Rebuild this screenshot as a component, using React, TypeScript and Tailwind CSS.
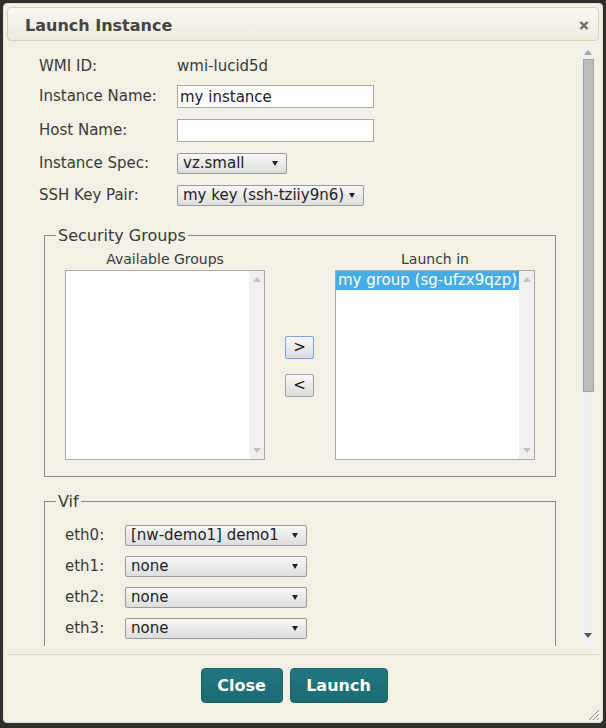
import React from 'react';

const Arrow: React.FC<{ className?: string }> = ({ className }) => (
    <svg width="6" height="5" viewBox="0 0 6 5" className={className}>
        <path d="M0 0H6L3 5Z" fill="currentColor" />
    </svg>
);

const UpArrow: React.FC<{ className?: string }> = ({ className }) => (
    <svg width="8" height="5" viewBox="0 0 8 5" className={className}>
        <path d="M0 5H8L4 0Z" fill="currentColor" />
    </svg>
);

const DownArrow: React.FC<{ className?: string }> = ({ className }) => (
    <svg width="8" height="5" viewBox="0 0 8 5" className={className}>
        <path d="M0 0H8L4 5Z" fill="currentColor" />
    </svg>
);

const Select: React.FC<{ value: string; width: string }> = ({ value, width }) => (
    <div className={`${width} h-[21px] flex items-center justify-between pl-[5px] pr-[8px] border border-[#9a9a9a] rounded-[2px] bg-gradient-to-b from-[#f7f7f7] to-[#dddddd] text-[15px] leading-[19px] text-[#222]`}>
        <span className="whitespace-nowrap">{value}</span>
        <Arrow className="text-[#222] shrink-0" />
    </div>
);

const ListBox: React.FC<{ items: string[]; selected?: number }> = ({ items, selected }) => (
    <div className="w-[200px] h-[190px] border border-[#a8a8a8] bg-white flex">
        <div className="flex-1 flex flex-col">
            {items.map((item, i) => (
                <div
                    key={item}
                    className={i === selected
                        ? 'h-[19px] pl-[2px] bg-[#48ade6] text-white text-[15px] leading-[19px] whitespace-nowrap'
                        : 'h-[19px] pl-[2px] text-[15px] leading-[19px] whitespace-nowrap'}
                >
                    {item}
                </div>
            ))}
        </div>
        <div className="w-[15px] bg-[#f0f0f0] flex flex-col items-center justify-between pt-[6px] pb-[6px]">
            <UpArrow className="text-[#c4c4c4]" />
            <DownArrow className="text-[#c4c4c4]" />
        </div>
    </div>
);

const MoveButton: React.FC<{ label: string; focused?: boolean }> = ({ label, focused }) => (
    <button
        className={`w-[29px] h-[23px] rounded-[2px] border bg-gradient-to-b from-[#f8f8f8] to-[#dcdcdc] text-[15px] leading-[19px] text-[#111] flex items-center justify-center ${focused ? 'border-[#7ba6e6]' : 'border-[#a0a0a0]'}`}
    >
        {label}
    </button>
);

const FormRow: React.FC<{ label: string; className: string; children: React.ReactNode }> = ({ label, className, children }) => (
    <div className={`flex items-center ${className}`}>
        <div className="w-[138px] shrink-0">{label}</div>
        {children}
    </div>
);

export default function App() {
    const vifs = [
        { name: 'eth0:', value: '[nw-demo1] demo1' },
        { name: 'eth1:', value: 'none' },
        { name: 'eth2:', value: 'none' },
        { name: 'eth3:', value: 'none' },
    ];

    return (
        <div className="w-[606px] h-[728px] bg-[#2f2f2b] pt-[3px] pb-[5px] px-[3px] font-['DejaVu_Sans',sans-serif] text-[#3a3a3a] text-[15px] leading-[19px]">
            <div className="relative h-full rounded-[4px] bg-[#f3f1e5] border border-[#e4e1d0] flex flex-col">
                {/* title bar */}
                <div className="mt-[3px] mx-[3px] h-[34px] shrink-0 rounded-[4px] border border-[#d6d2bc] bg-gradient-to-b from-[#f8f7f1] to-[#eeebde] flex items-center justify-between pt-[2px] pl-[17px] pr-[9px]">
                    <span className="font-bold text-[16px] text-[#444]">Launch Instance</span>
                    <svg width="10" height="9" viewBox="0 0 10 9">
                        <path d="M1.5 1L8.5 8M8.5 1L1.5 8" stroke="#6a6a6a" strokeWidth="2.4" />
                    </svg>
                </div>

                {/* scrolling content */}
                <div className="mt-[5px] ml-[3px] mr-[7px] h-[600px] shrink-0 flex">
                    <div className="flex-1 overflow-hidden pl-[32px] pt-[9px]">
                        <FormRow label="WMI ID:" className="h-[23px]">
                            <span>wmi-lucid5d</span>
                        </FormRow>
                        <FormRow label="Instance Name:" className="h-[23px] mt-[7px]">
                            <input
                                readOnly
                                value="my instance"
                                className="w-[197px] h-[23px] border border-[#a9a9a9] bg-white px-[2px] text-[15px] text-[#222] outline-none"
                            />
                        </FormRow>
                        <FormRow label="Host Name:" className="h-[23px] mt-[11px]">
                            <input
                                readOnly
                                value=""
                                className="w-[197px] h-[23px] border border-[#a9a9a9] bg-white px-[2px] text-[15px] outline-none"
                            />
                        </FormRow>
                        <FormRow label="Instance Spec:" className="h-[21px] mt-[11px]">
                            <Select value="vz.small" width="w-[110px]" />
                        </FormRow>
                        <FormRow label="SSH Key Pair:" className="h-[21px] mt-[11px]">
                            <Select value="my key (ssh-tziiy9n6)" width="w-[187px]" />
                        </FormRow>

                        <fieldset className="ml-[5px] mt-[20px] w-[512px] border border-[#8a8a8a] px-[11px] pt-[5px] pb-[16px]">
                            <legend className="px-[2px] text-[16px] leading-[19px]">Security Groups</legend>
                            <div className="ml-[9px] flex items-center gap-[20px]">
                                <div className="flex flex-col items-center">
                                    <div className="text-[14px] leading-[18px] mb-[2px]">Available Groups</div>
                                    <ListBox items={[]} />
                                </div>
                                <div className="w-[30px] pt-[22px] flex flex-col gap-[15px]">
                                    <MoveButton label=">" focused />
                                    <MoveButton label="<" />
                                </div>
                                <div className="flex flex-col items-center">
                                    <div className="text-[14px] leading-[18px] mb-[2px]">Launch in</div>
                                    <ListBox items={['my group (sg-ufzx9qzp)']} selected={0} />
                                </div>
                            </div>
                        </fieldset>

                        <fieldset className="ml-[5px] mt-[15px] w-[512px] border border-[#8a8a8a] px-[11px] pt-[14px] pb-[14px]">
                            <legend className="px-[2px] text-[16px] leading-[19px]">Vif</legend>
                            <div className="ml-[9px] flex flex-col gap-[10px]">
                                {vifs.map(v => (
                                    <div key={v.name} className="flex items-center h-[21px]">
                                        <div className="w-[60px]">{v.name}</div>
                                        <Select value={v.value} width="w-[182px]" />
                                    </div>
                                ))}
                            </div>
                        </fieldset>
                    </div>

                    {/* scrollbar */}
                    <div className="w-[15px] bg-[#efefef] flex flex-col items-center">
                        <div className="h-[13px] flex items-center justify-center">
                            <UpArrow className="text-[#a6a6a6]" />
                        </div>
                        <div className="w-[11px] h-[333px] ml-[1px] bg-[#bcbcbc] border border-[#a3a3a3]" />
                        <div className="flex-1" />
                        <div className="h-[17px] flex items-start justify-center pt-[4px]">
                            <DownArrow className="text-[#555]" />
                        </div>
                    </div>
                </div>

                {/* button pane */}
                <div className="mt-[8px] mx-[3px] border-t border-[#dcd8c2] pt-[13px] pr-[18px] flex justify-center gap-[7px]">
                    <button className="w-[82px] h-[35px] rounded-[4px] border border-[#1a6068] bg-gradient-to-b from-[#217880] to-[#1c6b72] text-white font-bold text-[16px]">
                        Close
                    </button>
                    <button className="w-[98px] h-[35px] rounded-[4px] border border-[#1a6068] bg-gradient-to-b from-[#217880] to-[#1c6b72] text-white font-bold text-[16px]">
                        Launch
                    </button>
                </div>

                {/* resize handle */}
                <svg width="12" height="12" viewBox="0 0 12 12" className="absolute right-[2px] bottom-[1px]">
                    <path d="M11 1L1 11M11 5L5 11M11 9L9 11" stroke="#8a8a80" strokeWidth="1" />
                </svg>
            </div>
        </div>
    );
}
